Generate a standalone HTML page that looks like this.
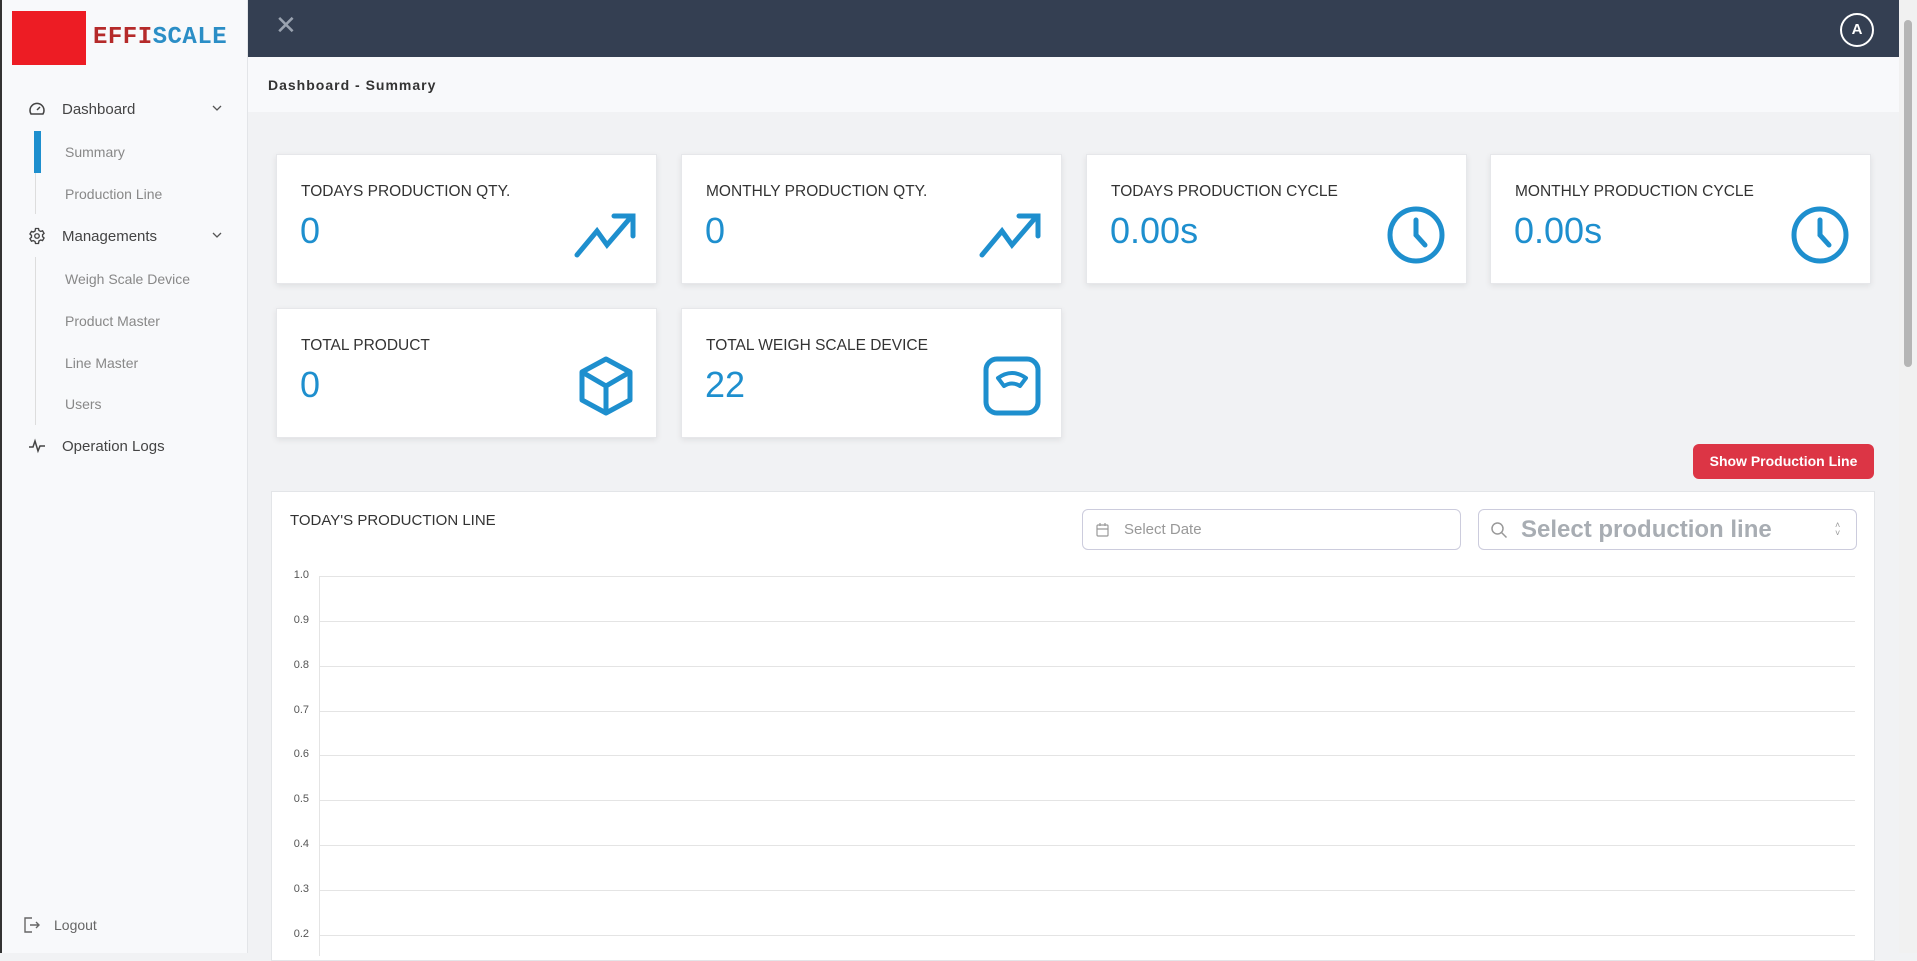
<!DOCTYPE html>
<html><head><meta charset="utf-8"><style>
*{box-sizing:border-box;margin:0;padding:0}
body{width:1917px;height:953px;overflow:hidden;background:#f1f2f4;font-family:"Liberation Sans",sans-serif;position:relative}
.abs{position:absolute}
#side{left:0;top:0;width:248px;height:953px;background:#f8f9fb;border-right:1px solid #e3e5e8;border-left:2px solid #333}
.nav{position:absolute;font-size:15px;color:#444;left:60px}
.sub{position:absolute;font-size:14px;color:#888;left:63px}
#top{left:248px;top:0;width:1651px;height:57px;background:#343f52}
#crumb{left:248px;top:57px;width:1651px;height:55px;background:#f8f9fb}
.card{position:absolute;background:#fff;border:1px solid #e6e7ea;box-shadow:0 2px 6px rgba(0,0,0,.08);width:381px;height:130px}
.card .l{position:absolute;left:24px;top:28px;font-size:15.5px;color:#333}
.card .v{position:absolute;left:23px;top:55px;font-size:36px;color:#1e8fce}
.card svg{position:absolute;right:20px;top:56px}
.yl{position:absolute;left:271px;width:38px;text-align:right;font-size:11px;color:#555}
.gl{position:absolute;left:320px;width:1535px;height:1px;background:#e4e4e4}
</style></head><body>
<div id="side" class="abs">
  <div class="abs" style="left:10px;top:11px;width:74px;height:54px;background:#ed1c24"></div>
  <div class="abs" style="left:91px;top:24px;font-family:'Liberation Mono',monospace;font-size:24px;font-weight:bold;letter-spacing:0.5px"><span style="color:#b52a2a">EFFI</span><span style="color:#2b8ec6">SCALE</span></div>
  <svg class="abs" style="left:26px;top:100px" width="18" height="18" viewBox="0 0 18 18" fill="none" stroke="#444" stroke-width="1.5"><path d="M3 14a7 7 0 1 1 12 0z"/><path d="M9 10l3-3"/></svg>
  <div class="nav" style="top:101px">Dashboard</div>
  <svg class="abs" style="left:210px;top:104px" width="10" height="8" viewBox="0 0 10 8" fill="none" stroke="#555" stroke-width="1.3"><path d="M1 2l4 4 4-4"/></svg>
  <div class="abs" style="left:33px;top:132px;width:1px;height:82px;background:#ddd"></div>
  <div class="abs" style="left:32px;top:131px;width:7px;height:42px;background:#1e8fce"></div>
  <div class="sub" style="top:144px">Summary</div>
  <div class="sub" style="top:186px">Production Line</div>
  <svg class="abs" style="left:26px;top:227px" width="18" height="18" viewBox="0 0 24 24" fill="none" stroke="#444" stroke-width="1.8"><circle cx="12" cy="12" r="3"/><path d="M10 2h4l.6 2.6 2.3 1.3 2.5-.8 2 3.4-2 1.8v2.6l2 1.8-2 3.4-2.5-.8-2.3 1.3L14 22h-4l-.6-2.6-2.3-1.3-2.5.8-2-3.4 2-1.8v-2.6l-2-1.8 2-3.4 2.5.8 2.3-1.3z"/></svg>
  <div class="nav" style="top:228px">Managements</div>
  <svg class="abs" style="left:210px;top:231px" width="10" height="8" viewBox="0 0 10 8" fill="none" stroke="#555" stroke-width="1.3"><path d="M1 2l4 4 4-4"/></svg>
  <div class="abs" style="left:33px;top:257px;width:1px;height:168px;background:#ddd"></div>
  <div class="sub" style="top:271px">Weigh Scale Device</div>
  <div class="sub" style="top:313px">Product Master</div>
  <div class="sub" style="top:355px">Line Master</div>
  <div class="sub" style="top:396px">Users</div>
  <svg class="abs" style="left:26px;top:437px" width="18" height="18" viewBox="0 0 18 18" fill="none" stroke="#444" stroke-width="1.5"><path d="M1 10h4l2-6 3 10 2-5h5"/></svg>
  <div class="nav" style="top:438px">Operation Logs</div>
  <svg class="abs" style="left:20px;top:916px" width="18" height="18" viewBox="0 0 18 18" fill="none" stroke="#666" stroke-width="1.4"><path d="M10 2H3v14h7M8 9h9M14 6l3 3-3 3"/></svg>
  <div class="abs" style="left:52px;top:917px;font-size:14px;color:#666">Logout</div>
</div>
<div id="top" class="abs">
  <div class="abs" style="left:27px;top:10px;color:#9aa3b0;font-size:26px">✕</div>
  <div class="abs" style="left:1592px;top:13px;width:34px;height:34px;border:2px solid #fff;border-radius:50%;color:#fff;font-weight:bold;font-size:15px;text-align:center;line-height:30px">A</div>
</div>
<div id="crumb" class="abs"><div class="abs" style="left:20px;top:20px;font-size:14px;font-weight:bold;color:#333;letter-spacing:1px">Dashboard - Summary</div></div>
<div class="abs" style="left:1899px;top:0;width:18px;height:953px;background:#f1f1f1"><div class="abs" style="left:5px;top:20px;width:8px;height:347px;background:#b5b5b5;border-radius:4px"></div></div>

<div class="card" style="left:276px;top:154px"><div class="l">TODAYS PRODUCTION QTY.</div><div class="v">0</div>
<svg width="62" height="50" viewBox="0 0 62 50" fill="none" stroke="#1e8fce" stroke-width="5" stroke-linecap="round"><path d="M3 44l20-24 10 14 24-28M40 5h19v20"/></svg></div>
<div class="card" style="left:681px;top:154px"><div class="l">MONTHLY PRODUCTION QTY.</div><div class="v">0</div>
<svg width="62" height="50" viewBox="0 0 62 50" fill="none" stroke="#1e8fce" stroke-width="5" stroke-linecap="round"><path d="M3 44l20-24 10 14 24-28M40 5h19v20"/></svg></div>
<div class="card" style="left:1086px;top:154px"><div class="l">TODAYS PRODUCTION CYCLE</div><div class="v">0.00s</div>
<svg width="60" height="60" viewBox="0 0 60 60" fill="none" stroke="#1e8fce" stroke-width="5" stroke-linecap="round" style="top:50px"><circle cx="30" cy="30" r="26"/><path d="M30 15v15l9 10"/></svg></div>
<div class="card" style="left:1490px;top:154px"><div class="l">MONTHLY PRODUCTION CYCLE</div><div class="v">0.00s</div>
<svg width="60" height="60" viewBox="0 0 60 60" fill="none" stroke="#1e8fce" stroke-width="5" stroke-linecap="round" style="top:50px"><circle cx="30" cy="30" r="26"/><path d="M30 15v15l9 10"/></svg></div>
<div class="card" style="left:276px;top:308px"><div class="l">TOTAL PRODUCT</div><div class="v">0</div>
<svg width="56" height="60" viewBox="0 0 56 60" fill="none" stroke="#1e8fce" stroke-width="5" stroke-linejoin="round" style="top:47px;right:22px"><path d="M28 3l24 13v28L28 57 4 44V16zM4 16l24 14 24-14M28 30v27"/></svg></div>
<div class="card" style="left:681px;top:308px"><div class="l">TOTAL WEIGH SCALE DEVICE</div><div class="v">22</div>
<svg width="58" height="60" viewBox="0 0 58 60" fill="none" stroke="#1e8fce" stroke-width="5" style="top:47px"><rect x="3" y="3" width="52" height="54" rx="11"/><path d="M15 22q14-10 28 0l-6 8q-8-5-16 0z" stroke-width="4" stroke-linejoin="round"/></svg></div>

<div class="abs" style="left:1693px;top:444px;width:181px;height:35px;background:#dc3545;border-radius:6px;color:#fff;font-weight:bold;font-size:14px;text-align:center;line-height:35px">Show Production Line</div>

<div class="abs" style="left:271px;top:491px;width:1604px;height:470px;background:#fff;border:1px solid #e3e5e8"></div>
<div class="abs" style="left:290px;top:512px;font-size:15px;color:#333">TODAY'S PRODUCTION LINE</div>
<div class="abs" style="left:1082px;top:509px;width:379px;height:41px;border:1px solid #ccd;border-radius:6px;background:#fff">
<svg class="abs" style="left:13px;top:13px" width="13" height="14" viewBox="0 0 13 14" fill="none" stroke="#999" stroke-width="1.2"><rect x="1" y="2" width="11" height="11" rx="1"/><path d="M1 6h11M4 0v3M9 0v3"/></svg>
<div class="abs" style="left:41px;top:11px;font-size:15px;color:#999">Select Date</div></div>
<div class="abs" style="left:1478px;top:509px;width:379px;height:41px;border:1px solid #ccd;border-radius:6px;background:#fff">
<svg class="abs" style="left:11px;top:11px" width="18" height="18" viewBox="0 0 18 18" fill="none" stroke="#999" stroke-width="1.5"><circle cx="7.5" cy="7.5" r="5.5"/><path d="M11.5 11.5l5 5"/></svg>
<div class="abs" style="left:42px;top:6px;font-size:24px;color:#a8adb3;font-weight:bold">Select production line</div>
<div class="abs" style="left:356px;top:11px;font-size:9px;color:#999;line-height:8px">˄<br>˅</div></div>

<div class="abs" style="left:319px;top:576px;width:1px;height:380px;background:#e4e4e4"></div>
<div class="gl" style="top:576px"></div><div class="yl" style="top:569px">1.0</div>
<div class="gl" style="top:621px"></div><div class="yl" style="top:614px">0.9</div>
<div class="gl" style="top:666px"></div><div class="yl" style="top:659px">0.8</div>
<div class="gl" style="top:711px"></div><div class="yl" style="top:704px">0.7</div>
<div class="gl" style="top:755px"></div><div class="yl" style="top:748px">0.6</div>
<div class="gl" style="top:800px"></div><div class="yl" style="top:793px">0.5</div>
<div class="gl" style="top:845px"></div><div class="yl" style="top:838px">0.4</div>
<div class="gl" style="top:890px"></div><div class="yl" style="top:883px">0.3</div>
<div class="gl" style="top:935px"></div><div class="yl" style="top:928px">0.2</div>
</body></html>
